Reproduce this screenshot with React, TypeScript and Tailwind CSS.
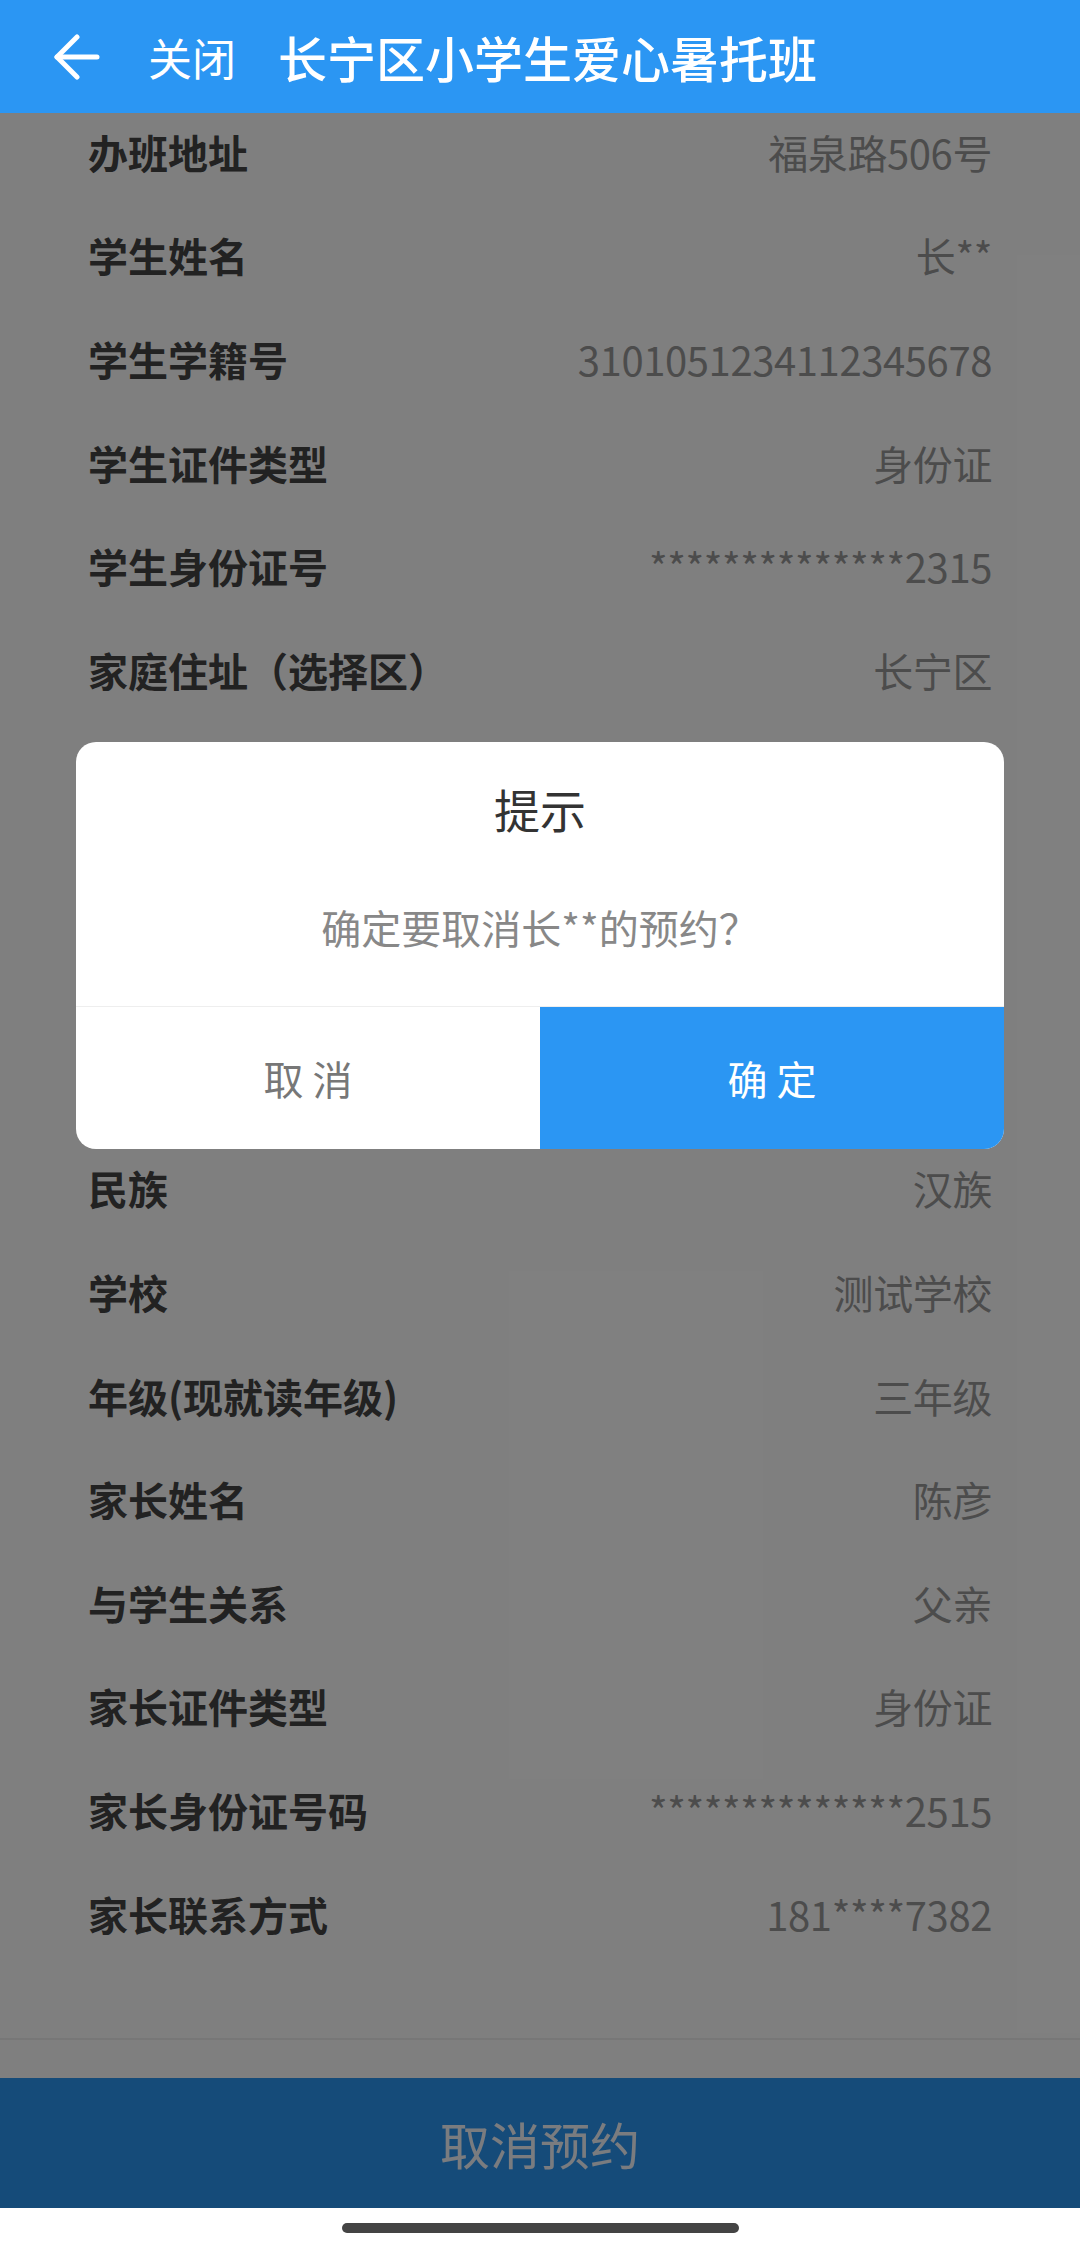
import React from 'react';

const font = { fontFamily: '"Noto Sans CJK SC", "Noto Sans", sans-serif' };

// rows hidden behind the dialog are left blank
const rows: [string, string][] = [
  ['办班地址', '福泉路506号'],
  ['学生姓名', '长**'],
  ['学生学籍号', '3101051234112345678'],
  ['学生证件类型', '身份证'],
  ['学生身份证号', '**************2315'],
  ['家庭住址（选择区）', '长宁区'],
  ['', ''],
  ['', ''],
  ['', ''],
  ['', ''],
  ['民族', '汉族'],
  ['学校', '测试学校'],
  ['年级(现就读年级)', '三年级'],
  ['家长姓名', '陈彦'],
  ['与学生关系', '父亲'],
  ['家长证件类型', '身份证'],
  ['家长身份证号码', '**************2515'],
  ['家长联系方式', '181****7382'],
];

function BackArrow() {
  return (
    <svg width="46" height="46" viewBox="0 0 46 46" fill="none" stroke="white" strokeWidth="5" strokeLinecap="round" strokeLinejoin="round">
      <path d="M43 23H3" />
      <path d="M23 3L3 23L23 43" />
    </svg>
  );
}

function InfoRow({ label, value }: { label: string; value: string }) {
  return (
    <div className="flex h-[103.65px] items-center justify-between">
      <span className="text-[40px] font-bold text-[#444]">{label}</span>
      <span className="text-[40px] tracking-[-0.4px] text-[#999]">{value}</span>
    </div>
  );
}

export default function App() {
  return (
    <div className="relative flex h-[2253px] w-[1080px] flex-col overflow-hidden bg-white" style={font}>
      {/* Header */}
      <header className="relative z-20 flex h-[113px] shrink-0 items-center bg-[#2b96f3] text-white">
        <div className="ml-[54px] flex items-center">
          <BackArrow />
        </div>
        <span className="ml-[48px] text-[44px] leading-none">关闭</span>
        <span className="ml-[42px] text-[49px] font-medium leading-none">长宁区小学生爱心暑托班</span>
      </header>

      {/* Detail list */}
      <div className="h-[1925px] shrink-0 overflow-hidden">
        <div className="-mt-[13px] px-[88px]">
          {rows.map(([label, value], i) => (
            <InfoRow key={i} label={label} value={value} />
          ))}
        </div>
      </div>

      {/* Bottom action */}
      <div className="shrink-0 border-t-2 border-[#eeeeee] pt-[38px]">
        <button className="flex h-[130px] w-full items-center justify-center bg-[#2b96f3] text-[50px] text-[#f4f8ff]">
          取消预约
        </button>
      </div>

      {/* Home indicator */}
      <div className="relative z-20 flex h-[45px] shrink-0 items-start justify-center bg-white pt-[15px]">
        <div className="h-[10px] w-[397px] rounded-full bg-[#444]" />
      </div>

      {/* Mask */}
      <div className="absolute inset-x-0 top-[113px] bottom-[45px] z-10 bg-black/50" />

      {/* Confirm dialog */}
      <div className="absolute left-[76px] top-[742px] z-30 flex w-[928px] flex-col overflow-hidden rounded-[20px] bg-white">
        <div className="flex h-[132px] items-center justify-center text-[46px] text-[#333]">提示</div>
        <div className="h-[132px] pt-[27px] text-center text-[40px] leading-[52px] text-[#888]">
          确定要取消长**的预约？
        </div>
        <div className="flex h-[143px] border-t border-[#eeeeee]">
          <button className="flex flex-1 items-center justify-center text-[40px] text-[#777]">取 消</button>
          <button className="flex flex-1 items-center justify-center bg-[#2b96f3] text-[40px] text-white">确 定</button>
        </div>
      </div>
    </div>
  );
}
